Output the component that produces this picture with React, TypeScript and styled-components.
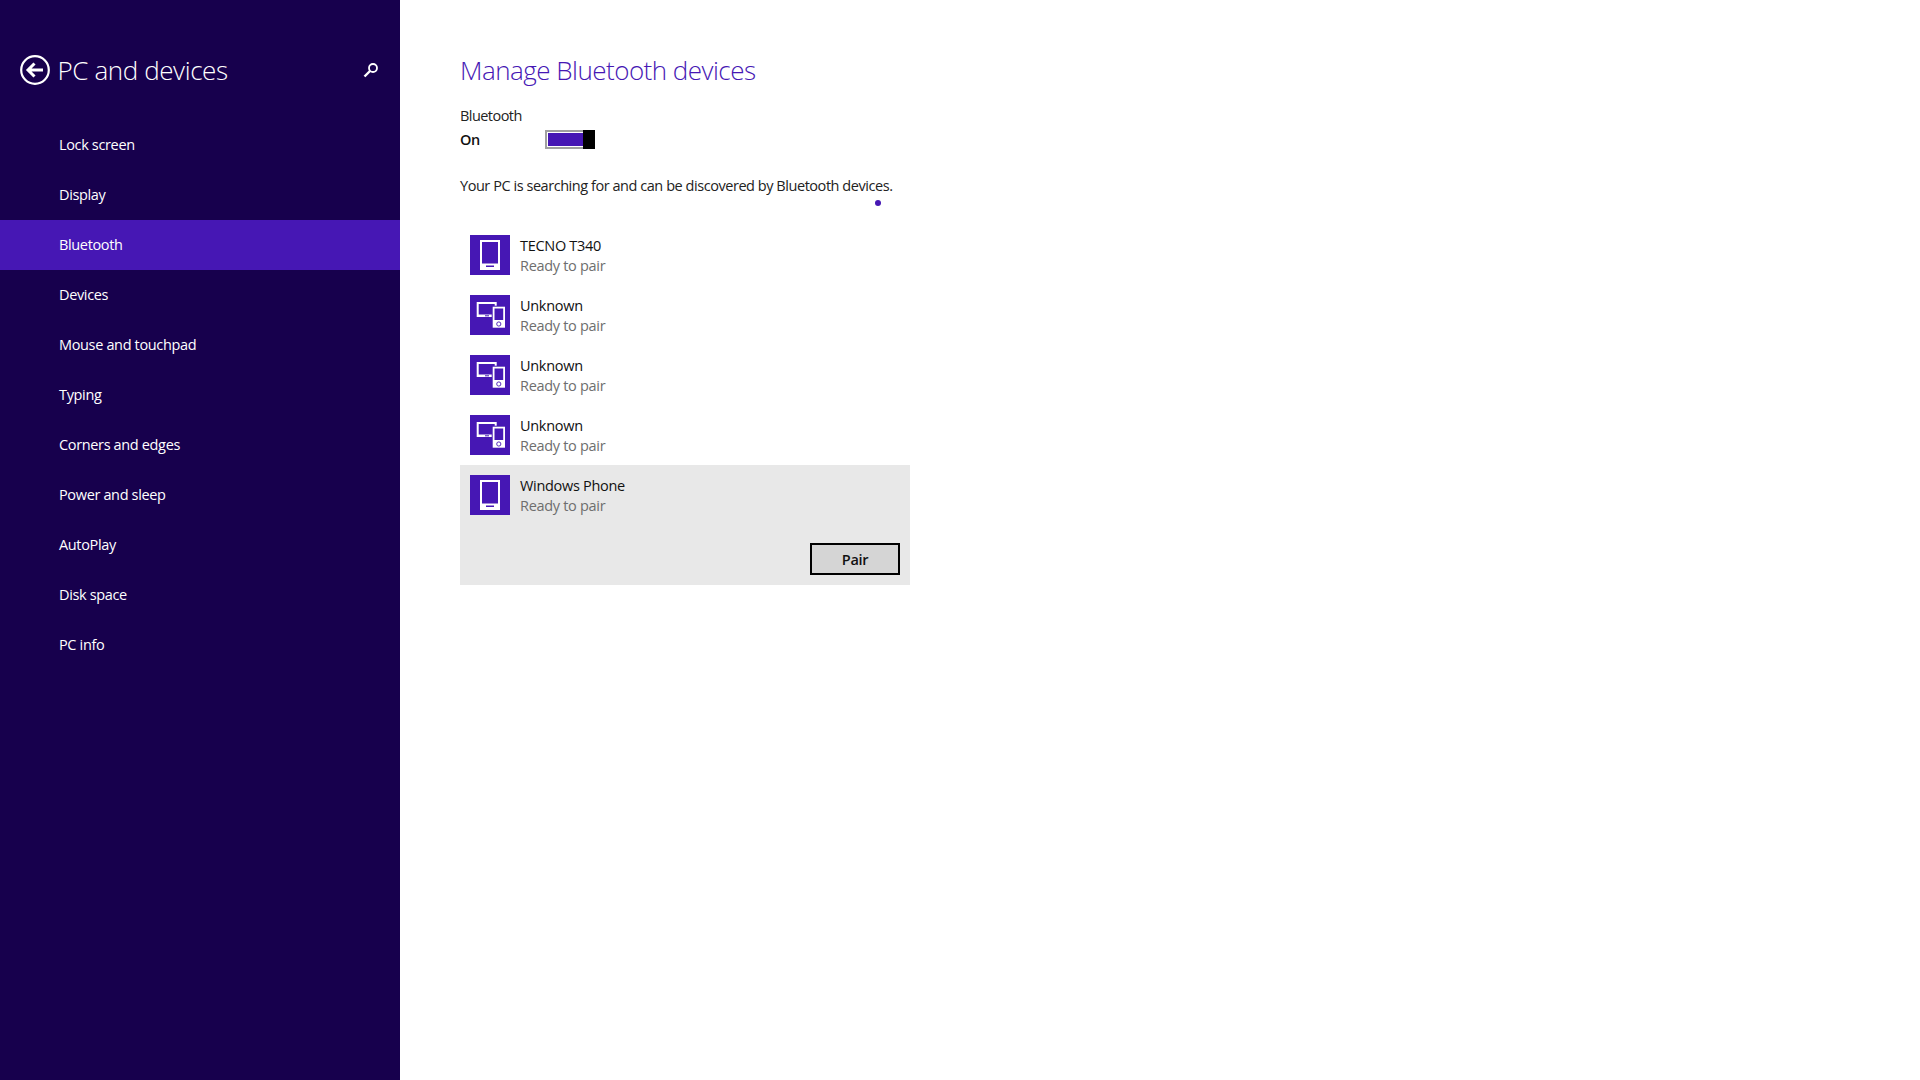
import { createGlobalStyle } from "styled-components";
import styled from "styled-components";

const purple = "#4617b4";
const dark = "#17004d";

const navItems = [
  "Lock screen",
  "Display",
  "Bluetooth",
  "Devices",
  "Mouse and touchpad",
  "Typing",
  "Corners and edges",
  "Power and sleep",
  "AutoPlay",
  "Disk space",
  "PC info",
];

const devices = [
  { name: "TECNO T340", kind: "phone" },
  { name: "Unknown", kind: "multi" },
  { name: "Unknown", kind: "multi" },
  { name: "Unknown", kind: "multi" },
];

const GlobalStyle = createGlobalStyle`
  html, body {
    margin: 0;
    padding: 0;
    background: #fff;
  }
  body {
    font-family: "Open Sans", "Noto Sans", sans-serif;
  }
`;

const Page = styled.div`
  display: flex;
  width: 1920px;
  height: 1080px;
  overflow: hidden;
`;

const Sidebar = styled.aside`
  width: 400px;
  flex-shrink: 0;
  background: ${dark};
  color: #fff;
`;

const Header = styled.div`
  display: flex;
  align-items: center;
  height: 60px;
  margin-top: 40px;
  margin-bottom: 20px;
  padding: 0 20px;
`;

const BackButton = styled.svg`
  width: 30px;
  height: 30px;
  margin-right: 8px;
  flex-shrink: 0;
`;

const HeaderTitle = styled.h1`
  flex: 1;
  margin: 0 0 0 -0.5px;
  font-size: 26px;
  font-weight: 300;
  line-height: 60px;
  letter-spacing: -0.4px;
`;

const SearchIcon = styled.svg`
  width: 16px;
  height: 16px;
  margin-right: 1px;
`;

const NavItem = styled.div<{ $active?: boolean }>`
  height: 50px;
  line-height: 50px;
  padding-left: 59px;
  font-size: 14.5px;
  letter-spacing: -0.35px;
  background: ${(p) => (p.$active ? purple : "transparent")};
`;

const Main = styled.main`
  padding: 40px 0 0 60px;
  width: 450px;
`;

const Title = styled.h2`
  margin: 0;
  height: 60px;
  line-height: 60px;
  font-size: 26px;
  font-weight: 300;
  color: ${purple};
  letter-spacing: -0.52px;
`;

const Label = styled.div`
  margin-top: 6px;
  font-size: 14.5px;
  line-height: 20px;
  letter-spacing: -0.55px;
  color: #222;
`;

const ToggleRow = styled.div`
  display: flex;
  align-items: center;
  height: 24px;
  margin-top: 1px;
`;

const OnText = styled.div`
  width: 85px;
  font-size: 14.5px;
  font-weight: 600;
  color: #111;
  letter-spacing: -0.3px;
`;

const Toggle = styled.div`
  display: flex;
  justify-content: flex-end;
  box-sizing: border-box;
  width: 50px;
  height: 19px;
  border: 2px solid #a0a0a0;
  border-right: none;
  background: ${purple};
  box-shadow: inset 0 0 0 1px #fff;
`;

const Thumb = styled.div`
  width: 12px;
  height: 19px;
  margin-top: -2px;
  background: #000;
`;

const Description = styled.p`
  margin: 23px 0 0;
  font-size: 14.5px;
  line-height: 24px;
  letter-spacing: -0.45px;
  white-space: nowrap;
  color: #222;
`;

const Progress = styled.div`
  display: flex;
  justify-content: flex-end;
  height: 6px;
  margin-top: 2px;
  padding-right: 29px;
  margin-bottom: 19px;
`;

const Dot = styled.span`
  width: 6px;
  height: 6px;
  border-radius: 50%;
  background: ${purple};
`;

const DeviceRow = styled.div`
  display: flex;
  gap: 10px;
  box-sizing: border-box;
  height: 60px;
  padding: 10px;
`;

const SelectedPanel = styled.div`
  height: 120px;
  background: #e8e8e8;
`;

const IconTile = styled.div`
  width: 40px;
  height: 40px;
  flex-shrink: 0;
  background: ${purple};
`;

const DeviceText = styled.div`
  padding-top: 1px;
  font-size: 14.5px;
  line-height: 20px;
  letter-spacing: -0.3px;
`;

const DeviceName = styled.div`
  color: #111;
`;

const DeviceStatus = styled.div`
  color: #6e6e6e;
`;

const PanelFooter = styled.div`
  display: flex;
  justify-content: flex-end;
  padding: 18px 10px 0 0;
`;

const PairButton = styled.button`
  box-sizing: border-box;
  width: 90px;
  height: 32px;
  padding: 1px 0 0;
  border: 2px solid #000;
  background: #d5d5d5;
  color: #111;
  font-family: inherit;
  font-size: 14.5px;
  font-weight: 600;
  letter-spacing: -0.3px;
`;

function PhoneIcon() {
  return (
    <svg width="40" height="40" viewBox="0 0 40 40">
      <rect x="10" y="5" width="20" height="30" fill="#fff" />
      <rect x="12" y="7" width="16" height="21.5" fill={purple} />
      <rect x="16" y="30.5" width="8" height="1.5" fill={purple} />
    </svg>
  );
}

function MultiIcon() {
  return (
    <svg width="40" height="40" viewBox="0 0 40 40">
      <rect x="6.7" y="7" width="20" height="15" fill="#fff" />
      <rect x="8.7" y="9" width="16" height="10.5" fill={purple} />
      <rect x="15" y="20.3" width="4" height="1" fill={purple} />
      <rect x="21.7" y="10.7" width="14.3" height="23" fill={purple} />
      <rect x="22.7" y="11.7" width="12.3" height="21" fill="#fff" />
      <rect x="24.5" y="13.5" width="8.7" height="11.5" fill={purple} />
      <circle cx="28.8" cy="29" r="2.1" fill="none" stroke={purple} strokeWidth="0.9" />
    </svg>
  );
}

export default function App() {
  return (
    <>
      <GlobalStyle />
      <Page>
        <Sidebar>
          <Header>
            <BackButton viewBox="0 0 30 30">
              <circle cx="15" cy="15" r="13.8" fill="none" stroke="#fff" strokeWidth="2.2" />
              <path d="M8 15h15M14.5 8.5L8 15l6.5 6.5" fill="none" stroke="#fff" strokeWidth="3" />
            </BackButton>
            <HeaderTitle>PC and devices</HeaderTitle>
            <SearchIcon viewBox="0 0 16 16">
              <circle cx="10" cy="6" r="4" fill="none" stroke="#fff" strokeWidth="1.8" />
              <path d="M7 9l-5.5 5.5" stroke="#fff" strokeWidth="2.4" />
            </SearchIcon>
          </Header>
          {navItems.map((item) => (
            <NavItem key={item} $active={item === "Bluetooth"}>
              {item}
            </NavItem>
          ))}
        </Sidebar>
        <Main>
          <Title>Manage Bluetooth devices</Title>
          <Label>Bluetooth</Label>
          <ToggleRow>
            <OnText>On</OnText>
            <Toggle>
              <Thumb />
            </Toggle>
          </ToggleRow>
          <Description>
            Your PC is searching for and can be discovered by Bluetooth devices.
          </Description>
          <Progress>
            <Dot />
          </Progress>
          {devices.map((d, i) => (
            <DeviceRow key={i}>
              <IconTile>{d.kind === "phone" ? <PhoneIcon /> : <MultiIcon />}</IconTile>
              <DeviceText>
                <DeviceName>{d.name}</DeviceName>
                <DeviceStatus>Ready to pair</DeviceStatus>
              </DeviceText>
            </DeviceRow>
          ))}
          <SelectedPanel>
            <DeviceRow>
              <IconTile>
                <PhoneIcon />
              </IconTile>
              <DeviceText>
                <DeviceName>Windows Phone</DeviceName>
                <DeviceStatus>Ready to pair</DeviceStatus>
              </DeviceText>
            </DeviceRow>
            <PanelFooter>
              <PairButton>Pair</PairButton>
            </PanelFooter>
          </SelectedPanel>
        </Main>
      </Page>
    </>
  );
}
